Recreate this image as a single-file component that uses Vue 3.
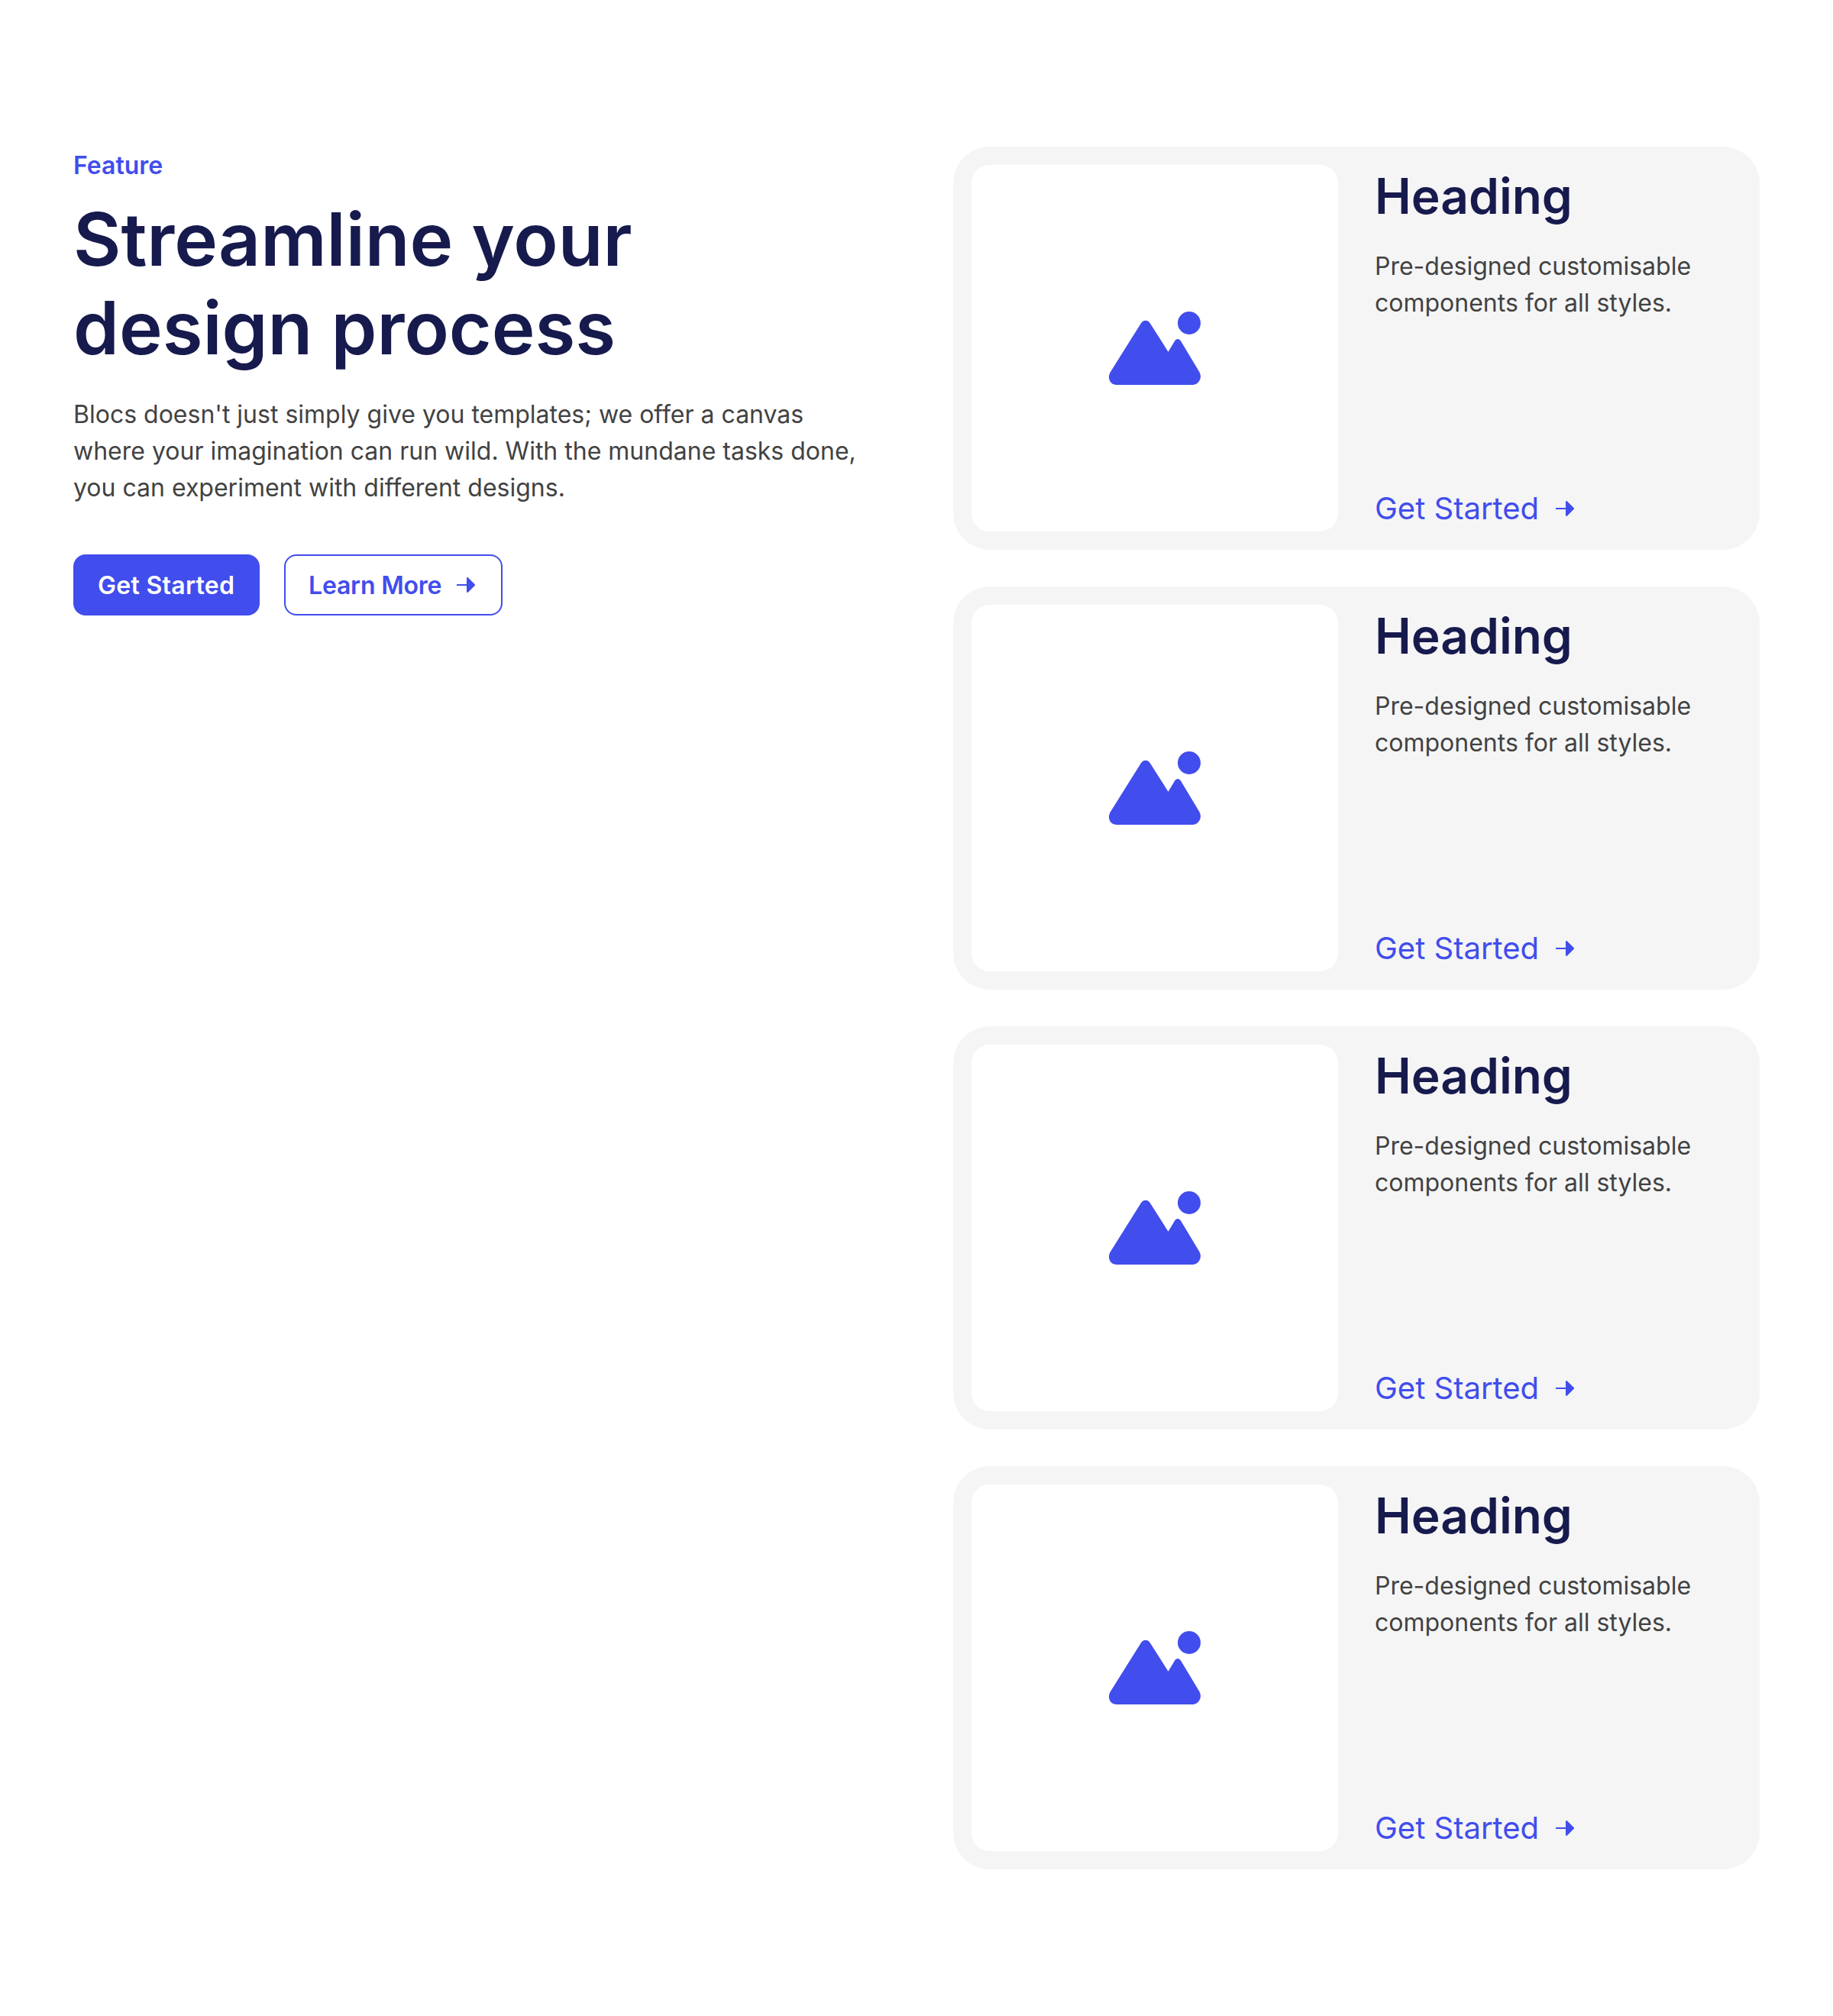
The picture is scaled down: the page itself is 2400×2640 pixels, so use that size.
<script setup>
const cards = Array.from({ length: 4 }, (_, id) => ({
  id,
  title: 'Heading',
  text: 'Pre-designed customisable components for all styles.',
  link: 'Get Started',
}))
</script>

<template>
  <main class="section">
    <div class="intro">
      <p class="eyebrow">Feature</p>
      <h1 class="title">Streamline your<br />design process</h1>
      <p class="lead">
        Blocs doesn't just simply give you templates; we offer a canvas where your imagination can
        run wild. With the mundane tasks done, you can experiment with different designs.
      </p>
      <div class="actions">
        <button class="btn btn-primary">Get Started</button>
        <button class="btn btn-outline">
          Learn More
          <svg class="arrow" width="24" height="20" viewBox="0 0 24 20" fill="currentColor">
            <path d="M0 9H13V.8Q13 0 14 0L15 .5L24 9.5V10.5L15 19.5L14 20Q13 20 13 19.2V11H0Z" />
          </svg>
        </button>
      </div>
    </div>
    <div class="cards">
      <article v-for="card in cards" :key="card.id" class="card">
        <div class="media">
          <svg width="120" height="96" viewBox="0 0 120 96" fill="currentColor">
            <circle cx="105" cy="15" r="15" />
            <path
              d="M42 15.2C45 10.6 50.8 10.6 53.8 15.2L77.6 52.8L86 38.8C88 35 92 35 94 38.6L118.6 79.4C122.5 86.8 117.5 96 109.5 96H10.2C1.6 96 -2.4 87.4 1.4 80Z"
            />
          </svg>
        </div>
        <div class="body">
          <div>
            <h2 class="card-title">{{ card.title }}</h2>
            <p class="card-text">{{ card.text }}</p>
          </div>
          <a class="link">
            {{ card.link }}
            <svg class="arrow" width="24" height="20" viewBox="0 0 24 20" fill="currentColor">
              <path d="M0 9H13V.8Q13 0 14 0L15 .5L24 9.5V10.5L15 19.5L14 20Q13 20 13 19.2V11H0Z" />
            </svg>
          </a>
        </div>
      </article>
    </div>
  </main>
</template>

<style>
body {
  background: #fff;
}
</style>

<style scoped>
.section {
  box-sizing: border-box;
  display: grid;
  grid-template-columns: 1fr 1fr;
  gap: 96px;
  width: 2400px;
  height: 2640px;
  padding: 192px 96px;
  background: #fff;
  font-family: Inter, 'Liberation Sans', sans-serif;
  color: #424242;
}
.eyebrow {
  margin: 0 0 14px;
  padding-top: 1px;
  font-size: 32px;
  line-height: 48px;
  font-weight: 600;
  color: #414dec;
}
.title {
  margin: 0 0 32px;
  font-size: 96px;
  line-height: 116px;
  font-weight: 600;
  color: #171a4d;
}
.lead {
  margin: 0;
  font-size: 32px;
  line-height: 48px;
}
.actions {
  display: flex;
  gap: 32px;
  margin-top: 63px;
}
.btn {
  box-sizing: border-box;
  display: flex;
  align-items: center;
  height: 80px;
  padding: 2px 32px 0;
  border: 0;
  border-radius: 16px;
  font: 600 32px/48px Inter, 'Liberation Sans', sans-serif;
  white-space: nowrap;
}
.btn-primary {
  width: 244px;
  background: #414dec;
  color: #fff;
  letter-spacing: 0.3px;
}
.btn-outline {
  gap: 19.7px;
  width: 286px;
  padding: 2px 30px 0;
  border: 2px solid #414dec;
  background: transparent;
  color: #414dec;
  letter-spacing: -0.2px;
}
.arrow {
  flex: none;
}
.btn .arrow {
  margin-bottom: 2px;
}
.cards {
  display: flex;
  flex-direction: column;
  gap: 48px;
}
.card {
  box-sizing: border-box;
  display: flex;
  gap: 48px;
  height: 528px;
  padding: 24px;
  border-radius: 48px;
  background: #f5f5f5;
}
.media {
  flex: none;
  display: flex;
  align-items: center;
  justify-content: center;
  width: 480px;
  height: 480px;
  border-radius: 24px;
  background: #fff;
  color: #414dec;
}
.body {
  flex: 1;
  display: flex;
  flex-direction: column;
  justify-content: space-between;
  align-items: flex-start;
}
.card-title {
  margin: 0 0 27px;
  font-size: 64px;
  line-height: 82px;
  font-weight: 600;
  color: #171a4d;
}
.card-text {
  margin: 0;
  font-size: 32px;
  line-height: 48px;
}
.link {
  display: flex;
  align-items: center;
  gap: 22px;
  font-size: 40px;
  line-height: 60px;
  color: #414dec;
}
</style>
